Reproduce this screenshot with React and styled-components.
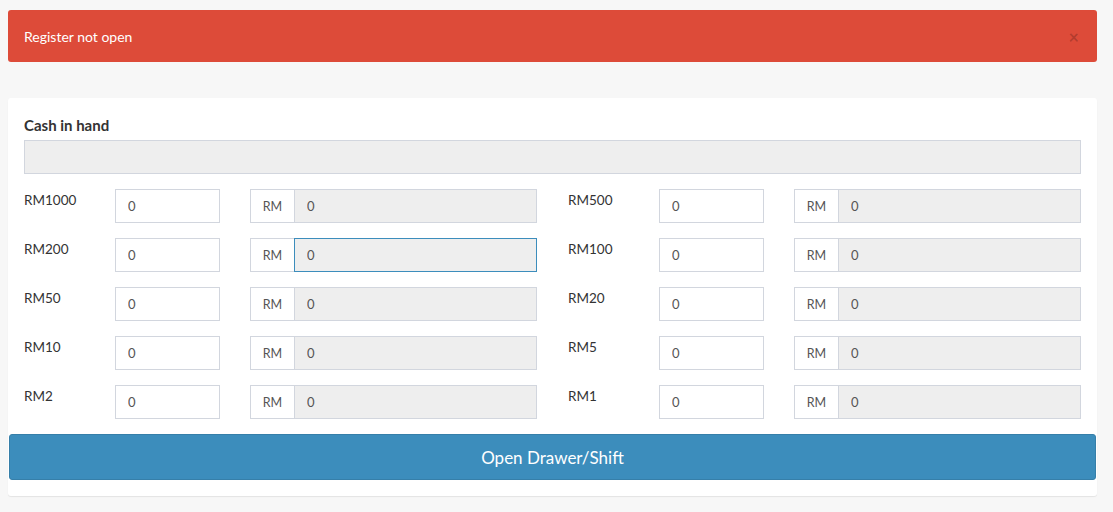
import styled, { createGlobalStyle } from "styled-components";

const GlobalStyle = createGlobalStyle`
  html, body {
    margin: 0;
    padding: 0;
    background: #f7f7f7;
  }
  body {
    font-family: "Source Sans Pro", Lato, "Liberation Sans", sans-serif;
    font-size: 13px;
    line-height: 20px;
    color: #333;
  }
  * {
    box-sizing: border-box;
  }
`;

const denominations = [
  ["RM1000", "RM500"],
  ["RM200", "RM100"],
  ["RM50", "RM20"],
  ["RM10", "RM5"],
  ["RM2", "RM1"],
];

function App() {
  return (
    <>
      <GlobalStyle />
      <Page>
        <Alert>
          <AlertText>Register not open</AlertText>
          <CloseButton>×</CloseButton>
        </Alert>
        <Card>
          <CardBody>
            <FieldLabel>Cash in hand</FieldLabel>
            <WideInput readOnly value="" />
            <Grid>
              {denominations.map((pair) =>
                pair.map((name) => (
                  <DenomRow key={name}>
                    <DenomLabel>{name}</DenomLabel>
                    <CountInput defaultValue="0" />
                    <InputGroup>
                      <Addon>RM</Addon>
                      <TotalInput
                        readOnly
                        value="0"
                        $focused={name === "RM200"}
                      />
                    </InputGroup>
                  </DenomRow>
                ))
              )}
            </Grid>
          </CardBody>
          <OpenButton>Open Drawer/Shift</OpenButton>
        </Card>
      </Page>
    </>
  );
}

export default App;

const Page = styled.div`
  padding: 10px 16px 16px 8px;
`;

const Alert = styled.div`
  display: flex;
  align-items: center;
  justify-content: space-between;
  height: 52px;
  padding: 2px 16px 0;
  background-color: #dd4b39;
  border-radius: 3px;
  color: #fff;
  margin-bottom: 36px;
`;

const AlertText = styled.span`
  font-size: 14px;
`;

const CloseButton = styled.span`
  color: rgba(0, 0, 0, 0.2);
  font-size: 18px;
  font-weight: bold;
  margin-right: 2px;
`;

const Card = styled.div`
  background: #fff;
  border-radius: 3px;
  box-shadow: 0 1px 1px rgba(0, 0, 0, 0.08);
  padding-bottom: 16px;
`;

const CardBody = styled.div`
  padding: 17px 16px 0;
`;

const FieldLabel = styled.div`
  font-weight: bold;
  font-size: 15px;
  line-height: 20px;
  margin-bottom: 5px;
`;

const inputBase = `
  display: block;
  height: 34px;
  border: 1px solid #d2d6de;
  padding: 6px 12px;
  font-family: inherit;
  font-size: 13px;
  color: #555;
  outline: none;
  border-radius: 0;
`;

const WideInput = styled.input`
  ${inputBase}
  width: 100%;
  background: #eee;
  margin-bottom: 15px;
`;

const Grid = styled.div`
  display: grid;
  grid-template-columns: 1fr 1fr;
  column-gap: 31px;
  row-gap: 15px;
`;

const DenomRow = styled.div`
  display: grid;
  grid-template-columns: 91px 105px 1fr;
`;

const DenomLabel = styled.label`
  padding-top: 1px;
  font-size: 13.5px;
`;

const CountInput = styled.input`
  ${inputBase}
  width: 105px;
  background: #fff;
`;

const InputGroup = styled.div`
  display: flex;
  margin-left: 30px;
`;

const Addon = styled.span`
  display: flex;
  align-items: center;
  justify-content: center;
  width: 44px;
  height: 34px;
  padding-top: 1px;
  border: 1px solid #d2d6de;
  border-right: none;
  background: #fff;
  color: #555;
  font-size: 12.5px;
`;

const TotalInput = styled.input`
  ${inputBase}
  flex: 1;
  min-width: 0;
  background: #eee;
  border-color: ${(p) => (p.$focused ? "#3c8dbc" : "#d2d6de")};
`;

const OpenButton = styled.button`
  display: block;
  width: calc(100% - 2px);
  margin: 15px 1px 0;
  height: 46px;
  border: 1px solid #367fa9;
  border-radius: 3px;
  background-color: #3c8dbc;
  color: #fff;
  font-family: inherit;
  font-size: 17px;
  cursor: pointer;
`;
